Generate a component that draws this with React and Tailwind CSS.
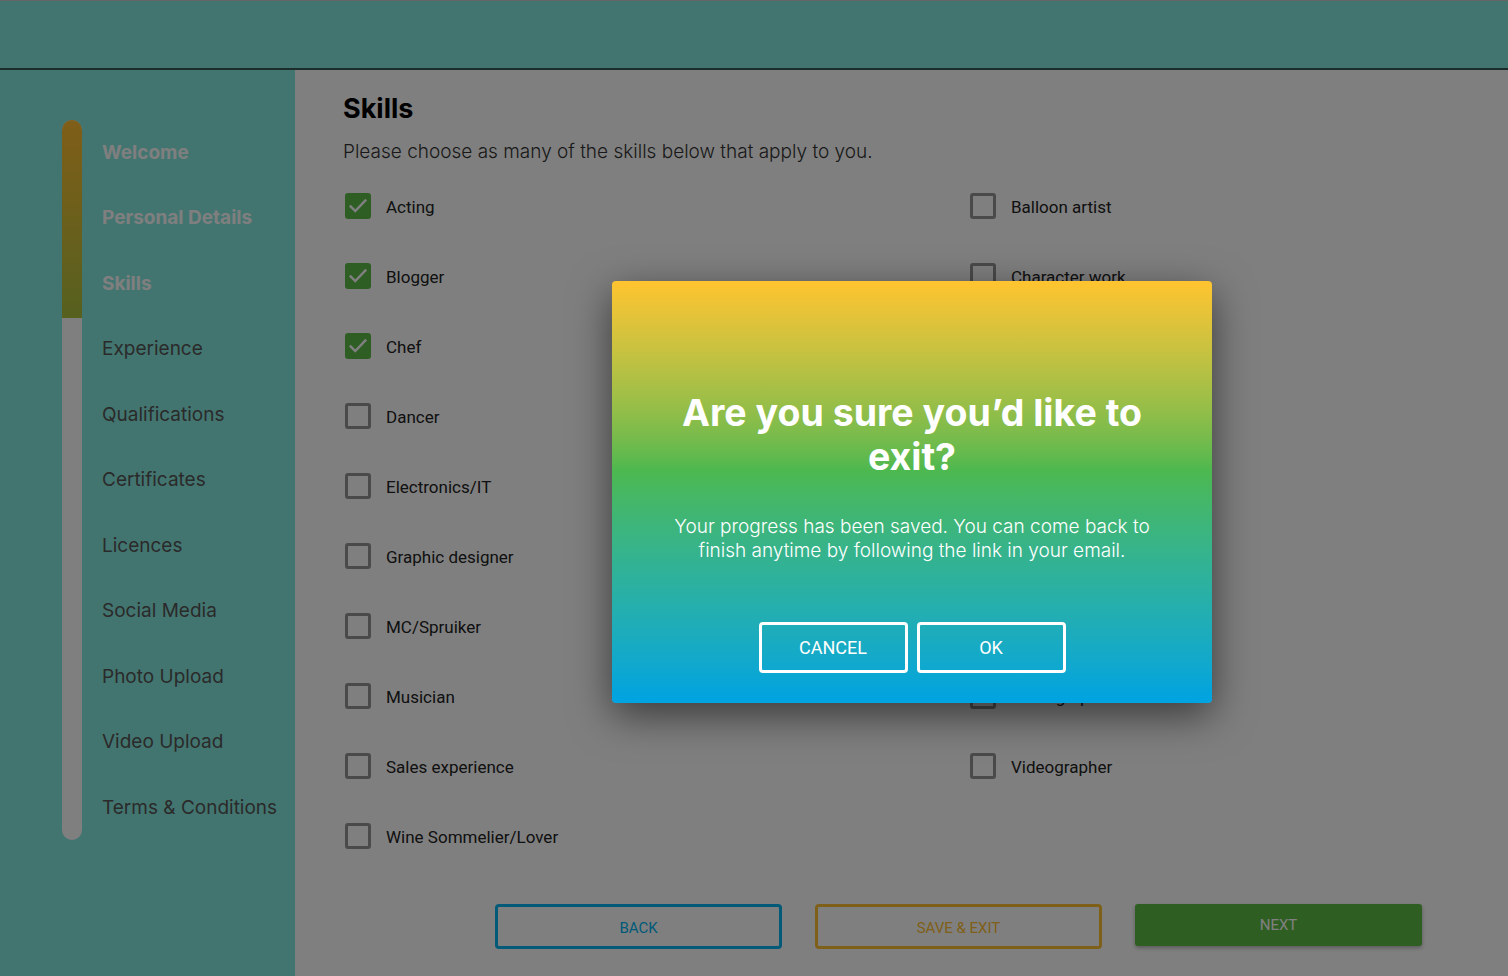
import { useState } from 'react';

const steps = [
    { label: 'Welcome', done: true },
    { label: 'Personal Details', done: true },
    { label: 'Skills', done: true },
    { label: 'Experience' },
    { label: 'Qualifications' },
    { label: 'Certificates' },
    { label: 'Licences' },
    { label: 'Social Media' },
    { label: 'Photo Upload' },
    { label: 'Video Upload' },
    { label: 'Terms & Conditions' },
];

const leftSkills = [
    'Acting',
    'Blogger',
    'Chef',
    'Dancer',
    'Electronics/IT',
    'Graphic designer',
    'MC/Spruiker',
    'Musician',
    'Sales experience',
    'Wine Sommelier/Lover',
];

const rightSkills = [
    'Balloon artist',
    'Character work',
    'Clown',
    'Comedian',
    'Face painter',
    'Magician',
    'Model',
    'Photographer',
    'Videographer',
];

const poppins = { fontFamily: 'Inter, "Noto Sans", sans-serif' };

function Checkbox({ label, checked, onToggle }) {
    return (
        <button onClick={onToggle} className="flex items-center h-[70px] text-left">
            {checked ? (
                <span className="flex items-center justify-center w-[26px] h-[26px] rounded-[3px] bg-[#5ebc4a]">
                    <svg className="w-[22px] h-[22px]" viewBox="0 0 24 24" fill="none" stroke="#ffffff" strokeWidth="2.6" strokeLinecap="square">
                        <path d="M4 12.5l5 5L20 6" />
                    </svg>
                </span>
            ) : (
                <span className="w-[26px] h-[26px] rounded-[3px] border-[3px] border-[#949494]" />
            )}
            <span className="ml-[15px] pt-[1px] text-[17px] leading-[24px] text-[#222]" style={{ fontFamily: 'Roboto, sans-serif' }}>
                {label}
            </span>
        </button>
    );
}

export default function App() {
    const [checked, setChecked] = useState({ Acting: true, Blogger: true, Chef: true });
    const toggle = (name) => setChecked((prev) => ({ ...prev, [name]: !prev[name] }));

    return (
        <div className="relative w-full h-[976px] overflow-hidden bg-white">
            {/* Header */}
            <header className="h-[70px] bg-[#86eae0] border-t border-t-[#c8c8c8] border-b-2 border-b-[#385c58]" />

            <div className="flex h-[906px]">
                {/* Sidebar steps */}
                <aside className="w-[295px] bg-[#86eae0] flex pl-[62px] pt-[50px]">
                    <div className="w-5 h-[720px] rounded-full bg-white overflow-hidden">
                        <div className="h-[198px] bg-gradient-to-b from-[#febc30] to-[#acc03e]" />
                    </div>
                    <ul className="ml-5">
                        {steps.map((s) => (
                            <li
                                key={s.label}
                                className={`flex items-center h-[65.5px] text-[19px] ${s.done ? 'font-bold text-white' : 'text-[#555]'}`}
                                style={poppins}
                            >
                                {s.label}
                            </li>
                        ))}
                    </ul>
                </aside>

                {/* Main */}
                <main className="flex-1 bg-white pl-12 pt-[23px]">
                    <h1 className="text-[27px] leading-[32px] font-bold text-black" style={poppins}>Skills</h1>
                    <p className="mt-[13px] text-[19px] leading-[27px] font-light text-[#333]" style={poppins}>
                        Please choose as many of the skills below that apply to you.
                    </p>

                    <div className="mt-[6px] grid grid-cols-[625px_1fr] pl-[2px]">
                        <div className="flex flex-col">
                            {leftSkills.map((s) => (
                                <Checkbox key={s} label={s} checked={!!checked[s]} onToggle={() => toggle(s)} />
                            ))}
                        </div>
                        <div className="flex flex-col">
                            {rightSkills.map((s) => (
                                <Checkbox key={s} label={s} checked={!!checked[s]} onToggle={() => toggle(s)} />
                            ))}
                        </div>
                    </div>

                    <div className="mt-[33px] ml-[152px] flex items-start gap-[33px]" style={{ fontFamily: 'Roboto, sans-serif' }}>
                        <button className="w-[287px] h-[45px] pt-[3px] rounded-[4px] border-[3px] border-[#00b4f0] text-[#00b4f0] text-[15px]">BACK</button>
                        <button className="w-[287px] h-[45px] pt-[3px] rounded-[4px] border-[3px] border-[#fec032] text-[#fec032] text-[15px]">SAVE &amp; EXIT</button>
                        <button className="w-[287px] h-[42px] rounded-[3px] bg-[#5ebc44] text-white text-[15px] shadow-[0_2px_4px_rgba(0,0,0,0.3)]">NEXT</button>
                    </div>
                </main>
            </div>

            {/* Dimmed backdrop */}
            <div className="absolute inset-0 bg-black/50" />

            {/* Exit dialog */}
            <div className="absolute left-[612px] top-[281px] w-[600px] h-[422px] rounded-[4px] bg-gradient-to-b from-[#ffc42f] via-[#4cb84f] via-45% to-[#00a3e2] shadow-[0_12px_40px_rgba(0,0,0,0.55)] flex flex-col items-center pt-[110px] px-[50px]">
                <h2 className="text-[37.5px] leading-[44px] font-bold text-white text-center" style={poppins}>
                    Are you sure you’d like to exit?
                </h2>
                <p className="mt-[36px] text-[19px] leading-[24px] font-light text-white text-center" style={poppins}>
                    Your progress has been saved. You can come back to finish anytime by following the link in your email.
                </p>
                <div className="mt-[59px] flex gap-[9px]" style={{ fontFamily: 'Roboto, sans-serif' }}>
                    <button className="w-[149px] h-[51px] rounded-[4px] border-[3px] border-white text-white text-[18px]">CANCEL</button>
                    <button className="w-[149px] h-[51px] rounded-[4px] border-[3px] border-white text-white text-[18px]">OK</button>
                </div>
            </div>
        </div>
    );
}
